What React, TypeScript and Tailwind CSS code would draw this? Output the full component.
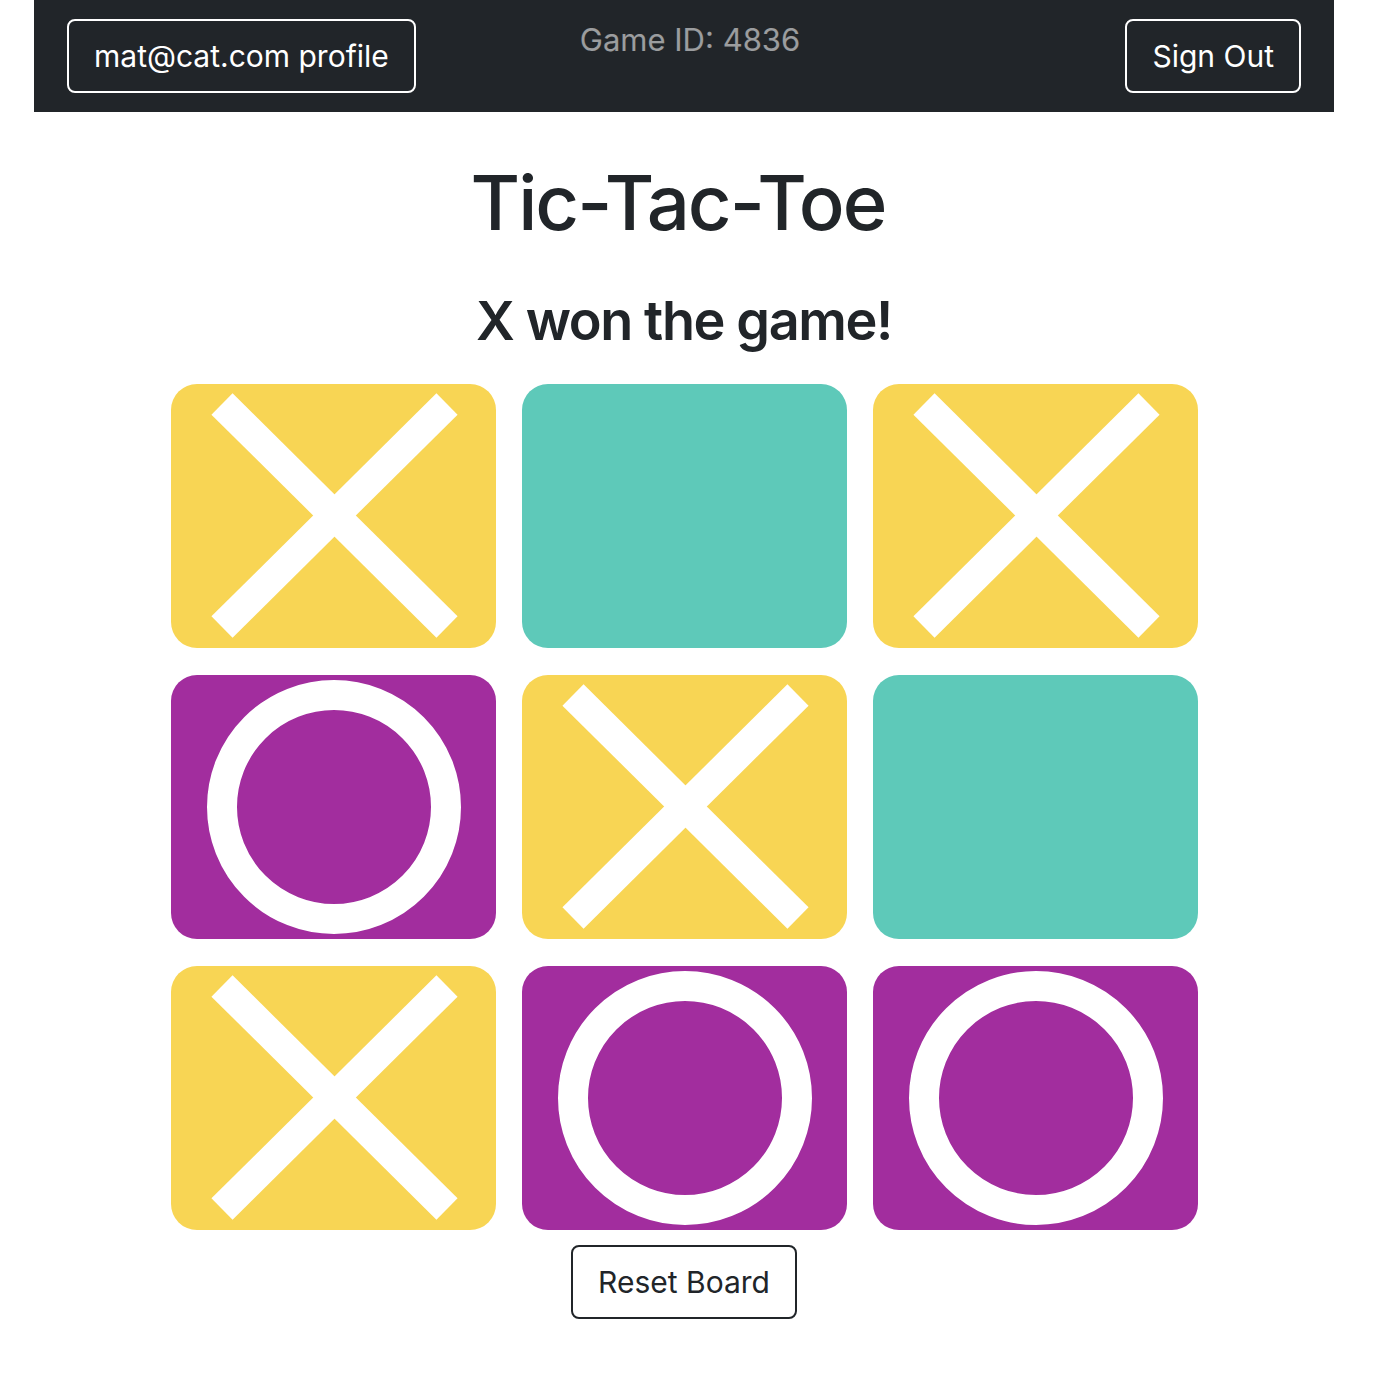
import React from "react";

type Mark = "X" | "O" | null;

const board: Mark[] = ["X", null, "X", "O", "X", null, "X", "O", "O"];

const font = { fontFamily: "Inter, 'Noto Sans', sans-serif" };

function XMark() {
  return (
    <svg viewBox="0 0 325 264" className="w-full h-full">
      <line x1="51" y1="20" x2="276" y2="243" stroke="white" strokeWidth="30" />
      <line x1="276" y1="20" x2="51" y2="243" stroke="white" strokeWidth="30" />
    </svg>
  );
}

function OMark() {
  return (
    <svg viewBox="0 0 325 264" className="w-full h-full">
      <circle cx="163" cy="132" r="112" fill="none" stroke="white" strokeWidth="30" />
    </svg>
  );
}

function Cell({ mark }: { mark: Mark }) {
  const bg =
    mark === "X" ? "bg-[#f8d554]" : mark === "O" ? "bg-[#a22d9e]" : "bg-[#5ec9b9]";
  return (
    <div className={`h-[264px] rounded-[26px] overflow-hidden ${bg}`}>
      {mark === "X" && <XMark />}
      {mark === "O" && <OMark />}
    </div>
  );
}

export default function App() {
  return (
    <div className="min-h-screen bg-white text-[#212529]" style={font}>
      <div className="w-[1300px] ml-[34px]">
        {/* Navbar */}
        <nav className="bg-[#212529] h-[112px] px-[33px] pt-[19px] flex items-start">
          <div className="flex-1">
            <button className="h-[74px] px-[25px] border-2 border-white rounded-lg text-white text-[30px] leading-none">
              mat@cat.com profile
            </button>
          </div>
          <span className="mt-[5px] pl-[12px] text-[31px] leading-none text-white/55">
            Game ID: 4836
          </span>
          <div className="flex-1 flex justify-end">
            <button className="h-[74px] px-[25px] border-2 border-white rounded-lg text-white text-[30px] leading-none">
              Sign Out
            </button>
          </div>
        </nav>

        {/* Main */}
        <main className="flex flex-col items-center">
          <h1 className="mt-[52px] mr-[12px] text-[76px] leading-none font-medium tracking-[-2px]">
            Tic-Tac-Toe
          </h1>
          <h2 className="mt-[54px] text-[54px] leading-none font-semibold tracking-[-1.4px]">
            X won the game!
          </h2>

          <div className="mt-[36px] w-[1027px] grid grid-cols-3 gap-x-[26px] gap-y-[27px]">
            {board.map((m, i) => (
              <Cell key={i} mark={m} />
            ))}
          </div>

          <button className="mt-[15px] h-[74px] px-[25px] border-2 border-[#212529] rounded-lg text-[30px] leading-none">
            Reset Board
          </button>
        </main>
      </div>
    </div>
  );
}
